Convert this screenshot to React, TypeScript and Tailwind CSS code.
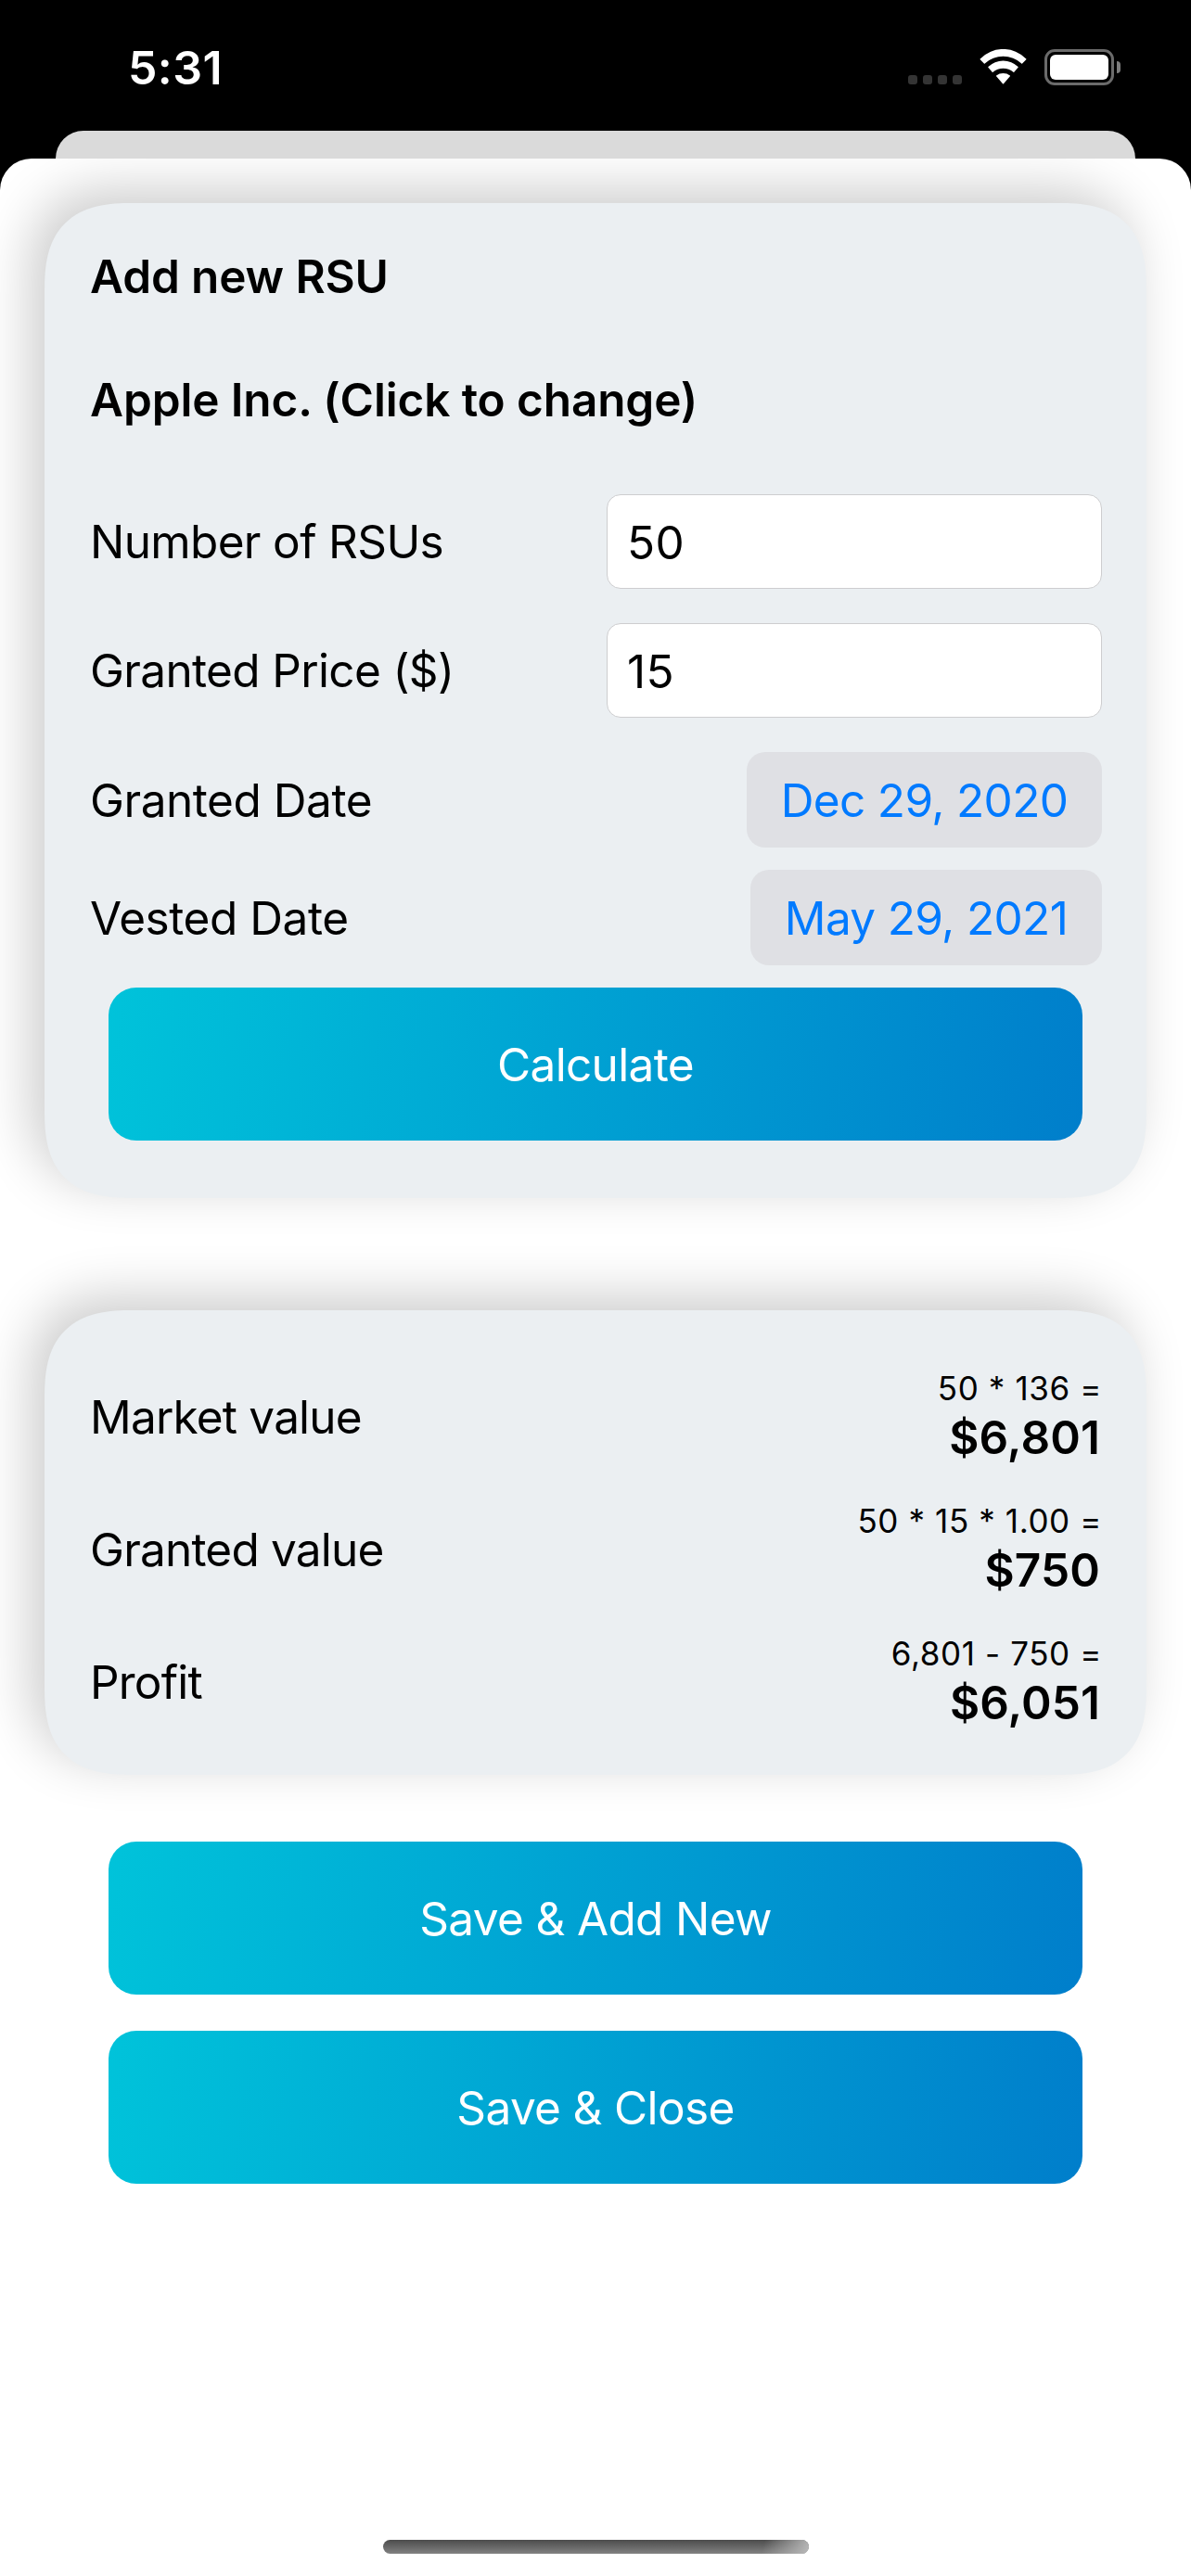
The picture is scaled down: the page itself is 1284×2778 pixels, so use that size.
import type { ReactNode } from "react";

function StatusBar() {
  return (
    <header className="flex h-[141px] items-start justify-between pt-[43px] pr-[76px] pl-[138px] text-white">
      <time className="text-[50px] leading-[60px] font-semibold tracking-[0.4px]">5:31</time>
      <div className="flex items-end pt-[10px]">
        <div className="mr-[19px] mb-[1px] flex gap-[6px]">
          {[0, 1, 2, 3].map((i) => (
            <span key={i} className="size-[10px] rounded-[3px] bg-[#343434]" />
          ))}
        </div>
        <svg className="mr-[19px] mb-[1px] h-[38px] w-[51px]" viewBox="-0.2 0 50.4 38" fill="currentColor" aria-label="Wi-Fi">
          <path d="M0.2 10.4A34.6 34.6 0 0 1 49.8 10.4Q50.2 10.8 49.8 11.2L45.6 15.5Q45.2 15.9 44.8 15.5A29.5 29.5 0 0 0 5.2 15.5Q4.8 15.9 4.4 15.5L0.2 11.2Q-0.2 10.8 0.2 10.4Z" />
          <path d="M8.9 19A23 23 0 0 1 41.1 19Q41.5 19.4 41.1 19.8L36.8 24.7Q36.4 25.1 36 24.7A16.9 16.9 0 0 0 14 24.7Q13.6 25.1 13.2 24.7L8.9 19.8Q8.5 19.4 8.9 19Z" />
          <path d="M17.6 28.4A12.3 12.3 0 0 1 32.4 28.4Q32.8 28.9 32.4 29.3L25.5 37.3Q25 37.8 24.5 37.3L17.6 29.3Q17.2 28.9 17.6 28.4Z" />
        </svg>
        <div className="flex items-center gap-[3px]">
          <div className="h-[39px] w-[75px] rounded-[11px] border-[3px] border-[#6b6b6b] p-[3px]">
            <div className="h-full w-full rounded-[6px] bg-white" />
          </div>
          <span className="h-[13px] w-[4px] rounded-r-full bg-[#7d7d7d]" />
        </div>
      </div>
    </header>
  );
}

function Card({ className, children }: { className: string; children: ReactNode }) {
  return (
    <section
      className={`mx-[48px] rounded-[75px] bg-[#ebeff2] pr-[48px] pl-[49px] shadow-[-15px_-15px_56px_rgba(0,0,0,0.2)] supports-[corner-shape:squircle]:rounded-[95px] supports-[corner-shape:squircle]:[corner-shape:superellipse(1.4)] ${className}`}
    >
      {children}
    </section>
  );
}

function FieldRow({ label, value }: { label: string; value: string }) {
  return (
    <label className="flex items-center justify-between">
      <span>{label}</span>
      <input
        className="h-[102px] w-[534px] rounded-[15px] border border-[#cdcdcf] bg-white pt-[2px] pl-[21px] tracking-[0.4px] outline-none"
        defaultValue={value}
      />
    </label>
  );
}

function DateRow({ label, value, width }: { label: string; value: string; width: string }) {
  return (
    <div className="flex items-center justify-between">
      <span className="tracking-[-0.45px]">{label}</span>
      <button className={`h-[103px] rounded-[20px] bg-[#dfe0e4] pt-px text-[#007aff] ${width}`}>{value}</button>
    </div>
  );
}

function GradientButton({ children }: { children: ReactNode }) {
  return (
    <button className="block h-[165px] w-[1050px] rounded-[30px] bg-[linear-gradient(98.93deg,#00c3da,#007ecb)] pt-px text-white">
      {children}
    </button>
  );
}

function ResultRow({ label, formula, result }: { label: string; formula: string; result: string }) {
  return (
    <div className="flex h-[104px] items-center justify-between">
      <span className="tracking-[-0.8px]">{label}</span>
      <div className="text-right">
        <div className="text-[35px] leading-[43px] tracking-[0.6px] [font-feature-settings:'calt'_0]">{formula}</div>
        <div className="pt-px pr-[2px] leading-[60px] font-semibold tracking-[0.1px]">{result}</div>
      </div>
    </div>
  );
}

export default function App() {
  return (
    <div className="flex h-[2778px] w-[1284px] flex-col overflow-hidden bg-black font-[Inter,sans-serif] text-[49.5px] leading-[60px] tracking-[-0.65px] text-black">
      <StatusBar />
      <div className="mx-[60px] h-[30px] shrink-0 rounded-t-[30px] bg-[#dadada]" />
      <main className="flex flex-1 flex-col overflow-hidden rounded-t-[34px] bg-white pt-[48px]">
        <Card className="h-[1073px] pt-[49px]">
          <h1 className="font-semibold tracking-[-0.12px]">Add new RSU</h1>
          <h2 className="mt-[73px] mb-[72px] font-semibold tracking-[-0.12px]">Apple Inc. (Click to change)</h2>
          <div className="flex flex-col gap-[37px]">
            <FieldRow label="Number of RSUs" value="50" />
            <FieldRow label="Granted Price ($)" value="15" />
            <div className="flex flex-col gap-[24px]">
              <DateRow label="Granted Date" value="Dec 29, 2020" width="w-[383px]" />
              <DateRow label="Vested Date" value="May 29, 2021" width="w-[379px]" />
              <div className="-ml-px flex justify-center">
                <GradientButton>Calculate</GradientButton>
              </div>
            </div>
          </div>
        </Card>

        <Card className="mt-[121px] flex h-[501px] flex-col gap-[39px] pt-[63px]">
          <ResultRow label="Market value" formula="50 * 136 =" result="$6,801" />
          <ResultRow label="Granted value" formula="50 * 15 * 1.00 =" result="$750" />
          <ResultRow label="Profit" formula="6,801 - 750 =" result="$6,051" />
        </Card>

        <div className="mt-[72px] flex flex-col items-center gap-[39px]">
          <GradientButton>Save &amp; Add New</GradientButton>
          <GradientButton>Save &amp; Close</GradientButton>
        </div>

        <div className="mx-auto mt-auto mb-[24px] h-[15px] w-[459px] overflow-hidden rounded-full bg-linear-to-b from-[#4c4c4c] to-[#828282]">
          <div className="ml-auto h-full w-[60px] bg-[linear-gradient(105deg,transparent_20%,#b8b8b8)]" />
        </div>
      </main>
    </div>
  );
}
